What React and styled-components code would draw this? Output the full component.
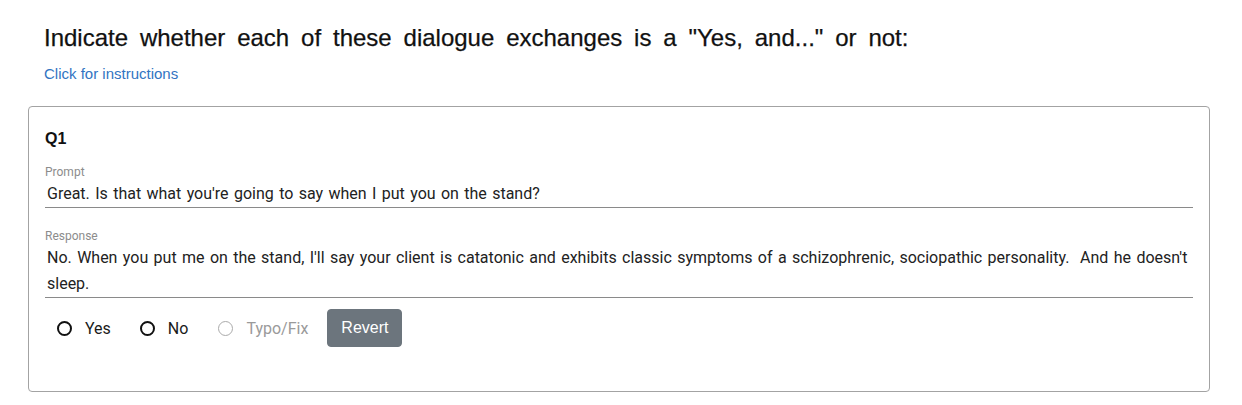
import styled, { createGlobalStyle } from "styled-components";

const GlobalStyle = createGlobalStyle`
  body {
    margin: 0;
    background: #fff;
    font-family: "Liberation Sans", Arial, sans-serif;
  }
`;

const Page = styled.div`
  padding: 25px 32px 0 28px;
`;

const Header = styled.div`
  padding-left: 16px;
`;

const Title = styled.h1`
  margin: 0;
  font-size: 24px;
  line-height: 26px;
  font-weight: normal;
  word-spacing: 5.2px;
  color: #111;
  -webkit-text-stroke: 0.25px #111;
`;

const InstructionsLink = styled.a`
  display: block;
  width: fit-content;
  margin-top: 14px;
  font-size: 15px;
  line-height: 18px;
  color: #3174c2;
  text-decoration: none;
  cursor: pointer;
`;

const Card = styled.div`
  margin-top: 23px;
  border: 1px solid #a3a3a3;
  border-radius: 4px;
  padding: 22px 16px 44px 16px;
`;

const QuestionTitle = styled.div`
  font-size: 16px;
  line-height: 20px;
  font-weight: bold;
  color: #111;
`;

const Field = styled.div`
  margin-top: ${(p) => p.$top}px;
  border-bottom: 1px solid #8a8a8a;
  font-family: Roboto, "Liberation Sans", sans-serif;
`;

const FieldLabel = styled.div`
  font-size: 12px;
  line-height: 16px;
  color: #8c8c8c;
`;

const FieldText = styled.div`
  padding: 1px 0 0 2px;
  font-size: 16px;
  line-height: 26px;
  word-spacing: 1.4px;
  color: #222;
  white-space: pre-wrap;
`;

const Controls = styled.div`
  display: flex;
  align-items: center;
  margin-top: 11px;
  padding-left: 12px;
`;

const RadioLabel = styled.label`
  display: flex;
  align-items: center;
  gap: 13px;
  margin-right: ${(p) => p.$gap}px;
  font-family: Roboto, "Liberation Sans", sans-serif;
  font-size: 16px;
  color: ${(p) => (p.$disabled ? "#9a9a9a" : "#1a1a1a")};
  cursor: ${(p) => (p.$disabled ? "default" : "pointer")};
`;

const RadioCircle = styled.span`
  width: 15px;
  height: 15px;
  box-sizing: border-box;
  border-radius: 50%;
  border: ${(p) => (p.$disabled ? "1.5px solid #aaa" : "2px solid #111")};
`;

const RevertButton = styled.button`
  height: 38px;
  padding: 0 13px;
  border: 1px solid #6c757d;
  border-radius: 4px;
  background: #6c757d;
  color: #fff;
  font-family: "Liberation Sans", Arial, sans-serif;
  font-size: 16px;
  cursor: pointer;
`;

const options = [
  { label: "Yes", gap: 29 },
  { label: "No", gap: 30 },
  { label: "Typo/Fix", gap: 19, disabled: true },
];

export default function App() {
  return (
    <>
      <GlobalStyle />
      <Page>
        <Header>
          <Title>Indicate whether each of these dialogue exchanges is a "Yes, and..." or not:</Title>
          <InstructionsLink>Click for instructions</InstructionsLink>
        </Header>
        <Card>
          <QuestionTitle>Q1</QuestionTitle>
          <Field $top={15}>
            <FieldLabel>Prompt</FieldLabel>
            <FieldText>Great. Is that what you're going to say when I put you on the stand?</FieldText>
          </Field>
          <Field $top={20}>
            <FieldLabel>Response</FieldLabel>
            <FieldText>
              {"No. When you put me on the stand, I'll say your client is catatonic and exhibits classic symptoms of a schizophrenic, sociopathic personality.  And he doesn't sleep."}
            </FieldText>
          </Field>
          <Controls>
            {options.map((o) => (
              <RadioLabel key={o.label} $gap={o.gap} $disabled={o.disabled}>
                <RadioCircle $disabled={o.disabled} />
                {o.label}
              </RadioLabel>
            ))}
            <RevertButton>Revert</RevertButton>
          </Controls>
        </Card>
      </Page>
    </>
  );
}
